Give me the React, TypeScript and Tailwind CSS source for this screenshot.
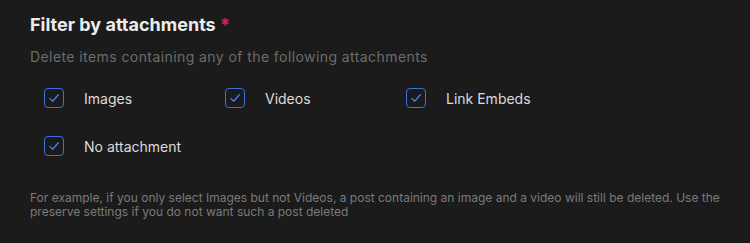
import React from 'react';

const options = ['Images', 'Videos', 'Link Embeds', 'No attachment'];

const CheckBox: React.FC<{ label: string }> = ({ label }) => (
  <label className="flex items-center gap-5 h-5 cursor-pointer">
    <span className="w-5 h-5 rounded-[4px] border border-[#3d6fe0] flex items-center justify-center shrink-0">
      <svg width="12" height="12" viewBox="0 0 12 12" fill="none">
        <path d="M1.8 6.4 L4.7 9.2 L10.3 2.8" stroke="#4a7cf0" strokeWidth="1.3" strokeLinecap="round" strokeLinejoin="round" />
      </svg>
    </span>
    <span className="text-[14px] text-[#dcdcdc]">{label}</span>
  </label>
);

export default function App() {
  return (
    <div className="w-[750px] h-[243px] bg-[#1b1b1b] px-[30px] pt-[13px] font-['Inter',sans-serif]">
      <h2 className="text-[18px] font-bold text-[#ececec] leading-[24px]">
        Filter by attachments <span className="text-[#d0264f]">*</span>
      </h2>
      <p className="mt-[10px] text-[14px] leading-[20px] text-[#6c6c6c] tracking-[0.42px]">
        Delete items containing any of the following attachments
      </p>
      <div className="mt-[21px] ml-[14px] grid grid-cols-[181px_181px_181px] gap-y-[28px]">
        {options.map((o) => (
          <CheckBox key={o} label={o} />
        ))}
      </div>
      <p className="mt-[35px] text-[12px] leading-[14px] text-[#7a7a7a]">
        For example, if you only select Images but not Videos, a post containing an image and a video will still be deleted. Use the preserve settings if you do not want such a post deleted
      </p>
    </div>
  );
}
